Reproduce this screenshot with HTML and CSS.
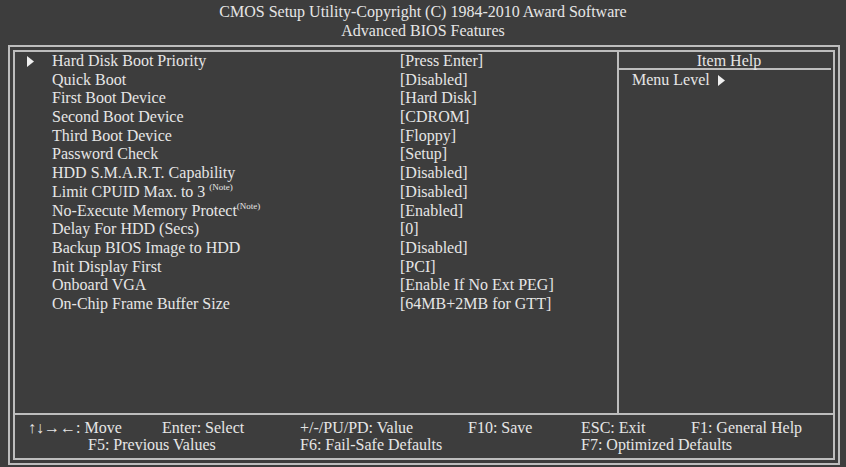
FILE: index.html
```html
<!DOCTYPE html>
<html>

<head>
    <title>Advanced BIOS Features</title>
    <link rel="stylesheet" href="styles.css">
</head>

<body>
    <div class="title">
        <div>CMOS Setup Utility-Copyright (C) 1984-2010 Award Software</div>
        <div>Advanced BIOS Features</div>
    </div>
    <div class="frame">
        <div class="inner">
            <div class="main">
                <ul class="items">
                    <li><span class="mark"><svg width="7" height="11" viewBox="0 0 7 11"><polygon points="0,0 7,5.5 0,11" fill="#f0f0f0" /></svg></span><span>Hard Disk Boot Priority</span><span>[Press Enter]</span></li>
                    <li><span class="mark"></span><span>Quick Boot</span><span>[Disabled]</span></li>
                    <li><span class="mark"></span><span>First Boot Device</span><span>[Hard Disk]</span></li>
                    <li><span class="mark"></span><span>Second Boot Device</span><span>[CDROM]</span></li>
                    <li><span class="mark"></span><span>Third Boot Device</span><span>[Floppy]</span></li>
                    <li><span class="mark"></span><span>Password Check</span><span>[Setup]</span></li>
                    <li><span class="mark"></span><span>HDD S.M.A.R.T. Capability</span><span>[Disabled]</span></li>
                    <li><span class="mark"></span><span>Limit CPUID Max. to 3 <sup>(Note)</sup></span><span>[Disabled]</span></li>
                    <li><span class="mark"></span><span>No-Execute Memory Protect<sup>(Note)</sup></span><span>[Enabled]</span></li>
                    <li><span class="mark"></span><span>Delay For HDD (Secs)</span><span>[0]</span></li>
                    <li><span class="mark"></span><span>Backup BIOS Image to HDD</span><span>[Disabled]</span></li>
                    <li><span class="mark"></span><span>Init Display First</span><span>[PCI]</span></li>
                    <li><span class="mark"></span><span>Onboard VGA</span><span>[Enable If No Ext PEG]</span></li>
                    <li><span class="mark"></span><span>On-Chip Frame Buffer Size</span><span>[64MB+2MB for GTT]</span></li>
                </ul>
                <div class="help">
                    <div class="help-title">Item Help</div>
                    <div class="help-text">Menu Level <svg width="7" height="11" viewBox="0 0 7 11"><polygon points="0,0 7,5.5 0,11" fill="#f0f0f0" /></svg></div>
                </div>
            </div>
            <div class="keys">
                <span>↑↓→←: Move</span>
                <span>Enter: Select</span>
                <span>+/-/PU/PD: Value</span>
                <span>F10: Save</span>
                <span>ESC: Exit</span>
                <span>F1: General Help</span>
                <span class="f5">F5: Previous Values</span>
                <span>F6: Fail-Safe Defaults</span>
                <span></span>
                <span class="f7">F7: Optimized Defaults</span>
            </div>
        </div>
    </div>
</body>

</html>
```

FILE: styles.css
```css
body {
    margin: 0;
    background: #3d3d3d;
    color: #e6e6e6;
    font-family: "Liberation Serif", "Times New Roman", serif;
    font-size: 16px;
}

.title {
    padding-top: 2px;
    line-height: 19px;
    text-align: center;
    height: 43px;
}

.frame {
    margin: 0 6px 3px 8px;
    border: 2px solid #bdbdbd;
    padding: 3px;
}

.inner {
    border: 2px solid #bdbdbd;
}

.main {
    display: flex;
    height: 361px;
    border-bottom: 2px solid #bdbdbd;
}

.items {
    list-style-type: none;
    margin: 0;
    padding: 0;
    width: 602px;
    border-right: 2px solid #bdbdbd;
}

.items>li {
    display: grid;
    grid-template-columns: 37px 348px 1fr;
    line-height: 18.7px;
    height: 18.7px;
}

.mark {
    padding-left: 12px;
}

.mark svg {
    vertical-align: -1px;
}

sup {
    font-size: 9px;
    vertical-align: 7px;
    line-height: 0;
}

.help {
    flex-grow: 1;
}

.help-title {
    height: 16px;
    line-height: 17px;
    text-align: center;
    padding-left: 8px;
    margin-right: 2px;
    border-bottom: 2px solid #bdbdbd;
}

.help-text {
    padding-left: 13px;
    line-height: 20px;
}

.help-text svg {
    margin-left: 4px;
    vertical-align: -1px;
}

.keys {
    display: grid;
    grid-template-columns: 134px 138px 168px 113px 110px 1fr;
    padding: 4px 0 4px 13px;
    line-height: 17.3px;
}

.f5 {
    grid-column: 1 / 3;
    padding-left: 60px;
}

.f7 {
    grid-column: 5 / 7;
}
```
